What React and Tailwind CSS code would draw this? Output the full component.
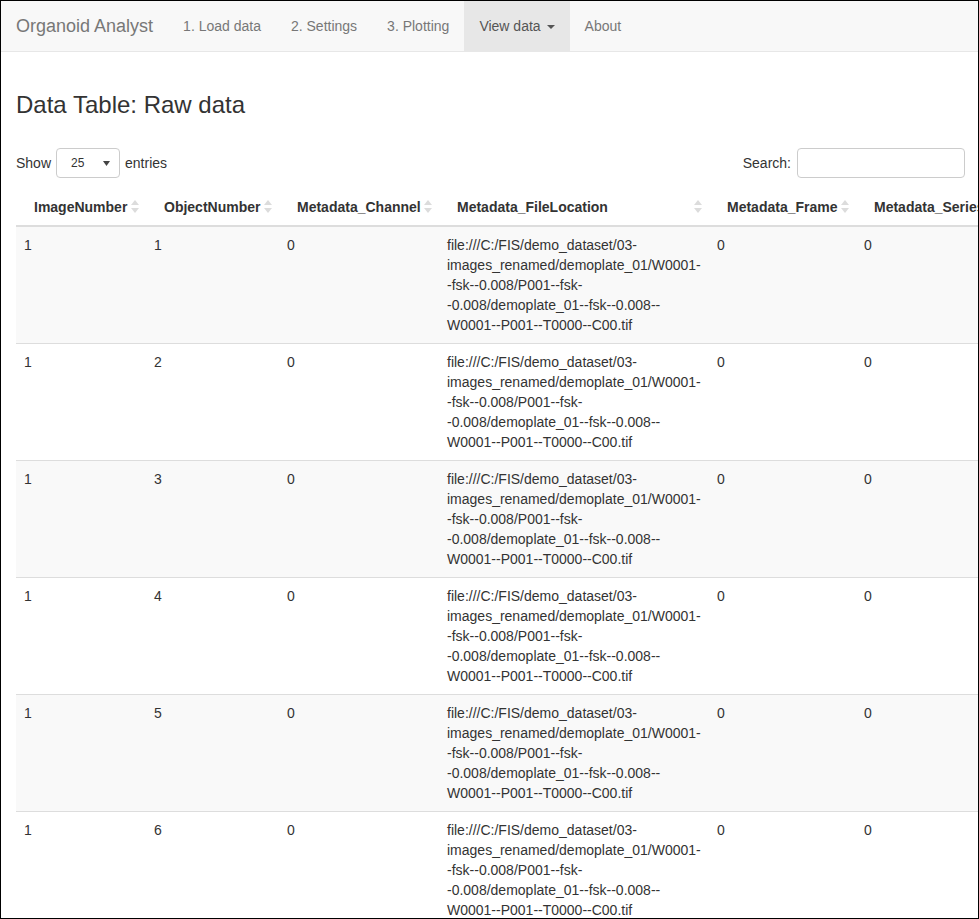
import React from "react";

const font = { fontFamily: '"Liberation Sans", Arial, sans-serif' };

const SortIcon = () => (
  <svg width="8" height="13" viewBox="0 0 8 13" className="absolute right-[7px] top-[15px]">
    <path d="M4 0 L8 5 L0 5 Z" fill="#dcdcdc" />
    <path d="M0 8 L8 8 L4 13 Z" fill="#dcdcdc" />
  </svg>
);

const columns = [
  { name: "ImageNumber", w: "w-[130px]" },
  { name: "ObjectNumber", w: "w-[133px]" },
  { name: "Metadata_Channel", w: "w-[160px]" },
  { name: "Metadata_FileLocation", w: "w-[270px]" },
  { name: "Metadata_Frame", w: "w-[147px]" },
  { name: "Metadata_Series", w: "w-[160px]" },
  { name: "Metadata_Well", w: "w-[140px]" },
];

const fileLines = [
  "file:///C:/FIS/demo_dataset/03-",
  "images_renamed/demoplate_01/W0001-",
  "-fsk--0.008/P001--fsk-",
  "-0.008/demoplate_01--fsk--0.008--",
  "W0001--P001--T0000--C00.tif",
];

const rows = [1, 2, 3, 4, 5, 6];

export default function App() {
  return (
    <div
      className="w-[979px] h-[919px] border border-black overflow-hidden bg-white text-[14px] text-[#333]"
      style={font}
    >
      {/* navbar */}
      <div className="flex h-[51px] items-stretch bg-[#f8f8f8] border-b border-[#e7e7e7]">
        <div className="flex items-center px-[15px] text-[18px] text-[#777]">Organoid Analyst</div>
        <div className="flex items-center px-[15px] text-[#777]">1. Load data</div>
        <div className="flex items-center px-[15px] text-[#777]">2. Settings</div>
        <div className="flex items-center px-[15px] text-[#777]">3. Plotting</div>
        <div className="flex items-center px-[15px] text-[#555] bg-[#e7e7e7]">
          View data
          <svg width="8" height="4" viewBox="0 0 8 4" className="ml-[6px] mt-[1px]">
            <path d="M0 0 L8 0 L4 4 Z" fill="#555" />
          </svg>
        </div>
        <div className="flex items-center px-[15px] text-[#777]">About</div>
      </div>

      <div className="px-[15px]">
        <h3 className="mt-[40px] text-[24px] leading-[26px] font-medium">Data Table: Raw data</h3>

        <div className="mt-[30px] -mr-[2px] flex h-[30px] items-center justify-between">
          <div className="flex items-center">
            <span>Show</span>
            <div className="ml-[5px] mr-[5px] flex h-[30px] w-[64px] items-center justify-between rounded-[4px] border border-[#ccc] pl-[14px] pr-[9px] text-[12px]">
              <span>25</span>
              <svg width="7" height="5" viewBox="0 0 7 5">
                <path d="M0 0 L7 0 L3.5 5 Z" fill="#444" />
              </svg>
            </div>
            <span>entries</span>
          </div>
          <div className="flex items-center">
            <span>Search:</span>
            <div className="ml-[6px] h-[30px] w-[168px] rounded-[4px] border border-[#ccc]" />
          </div>
        </div>

        <table className="mt-[7px] w-[1140px] table-fixed border-collapse">
          <colgroup>
            {columns.map((c) => (
              <col key={c.name} className={c.w} />
            ))}
          </colgroup>
          <thead>
            <tr>
              {columns.map((c) => (
                <th
                  key={c.name}
                  className="relative whitespace-nowrap border-b-2 border-[#ddd] px-[18px] pt-[12px] pb-[8px] text-left font-bold leading-[20px]"
                >
                  {c.name}
                  <SortIcon />
                </th>
              ))}
            </tr>
          </thead>
          <tbody>
            {rows.map((n, i) => (
              <tr key={n} className={i % 2 === 0 ? "bg-[#f9f9f9]" : "bg-white"}>
                <td className="border-t border-[#ddd] p-[8px] align-top leading-[20px]">1</td>
                <td className="border-t border-[#ddd] p-[8px] align-top leading-[20px]">{n}</td>
                <td className="border-t border-[#ddd] p-[8px] align-top leading-[20px]">0</td>
                <td className="border-t border-[#ddd] p-[8px] align-top leading-[20px]">
                  {fileLines.map((l) => (
                    <div key={l} className="whitespace-nowrap">{l}</div>
                  ))}
                </td>
                <td className="border-t border-[#ddd] p-[8px] align-top leading-[20px]">0</td>
                <td className="border-t border-[#ddd] p-[8px] align-top leading-[20px]">0</td>
                <td className="border-t border-[#ddd] p-[8px] align-top leading-[20px]">A01</td>
              </tr>
            ))}
          </tbody>
        </table>
      </div>
    </div>
  );
}
